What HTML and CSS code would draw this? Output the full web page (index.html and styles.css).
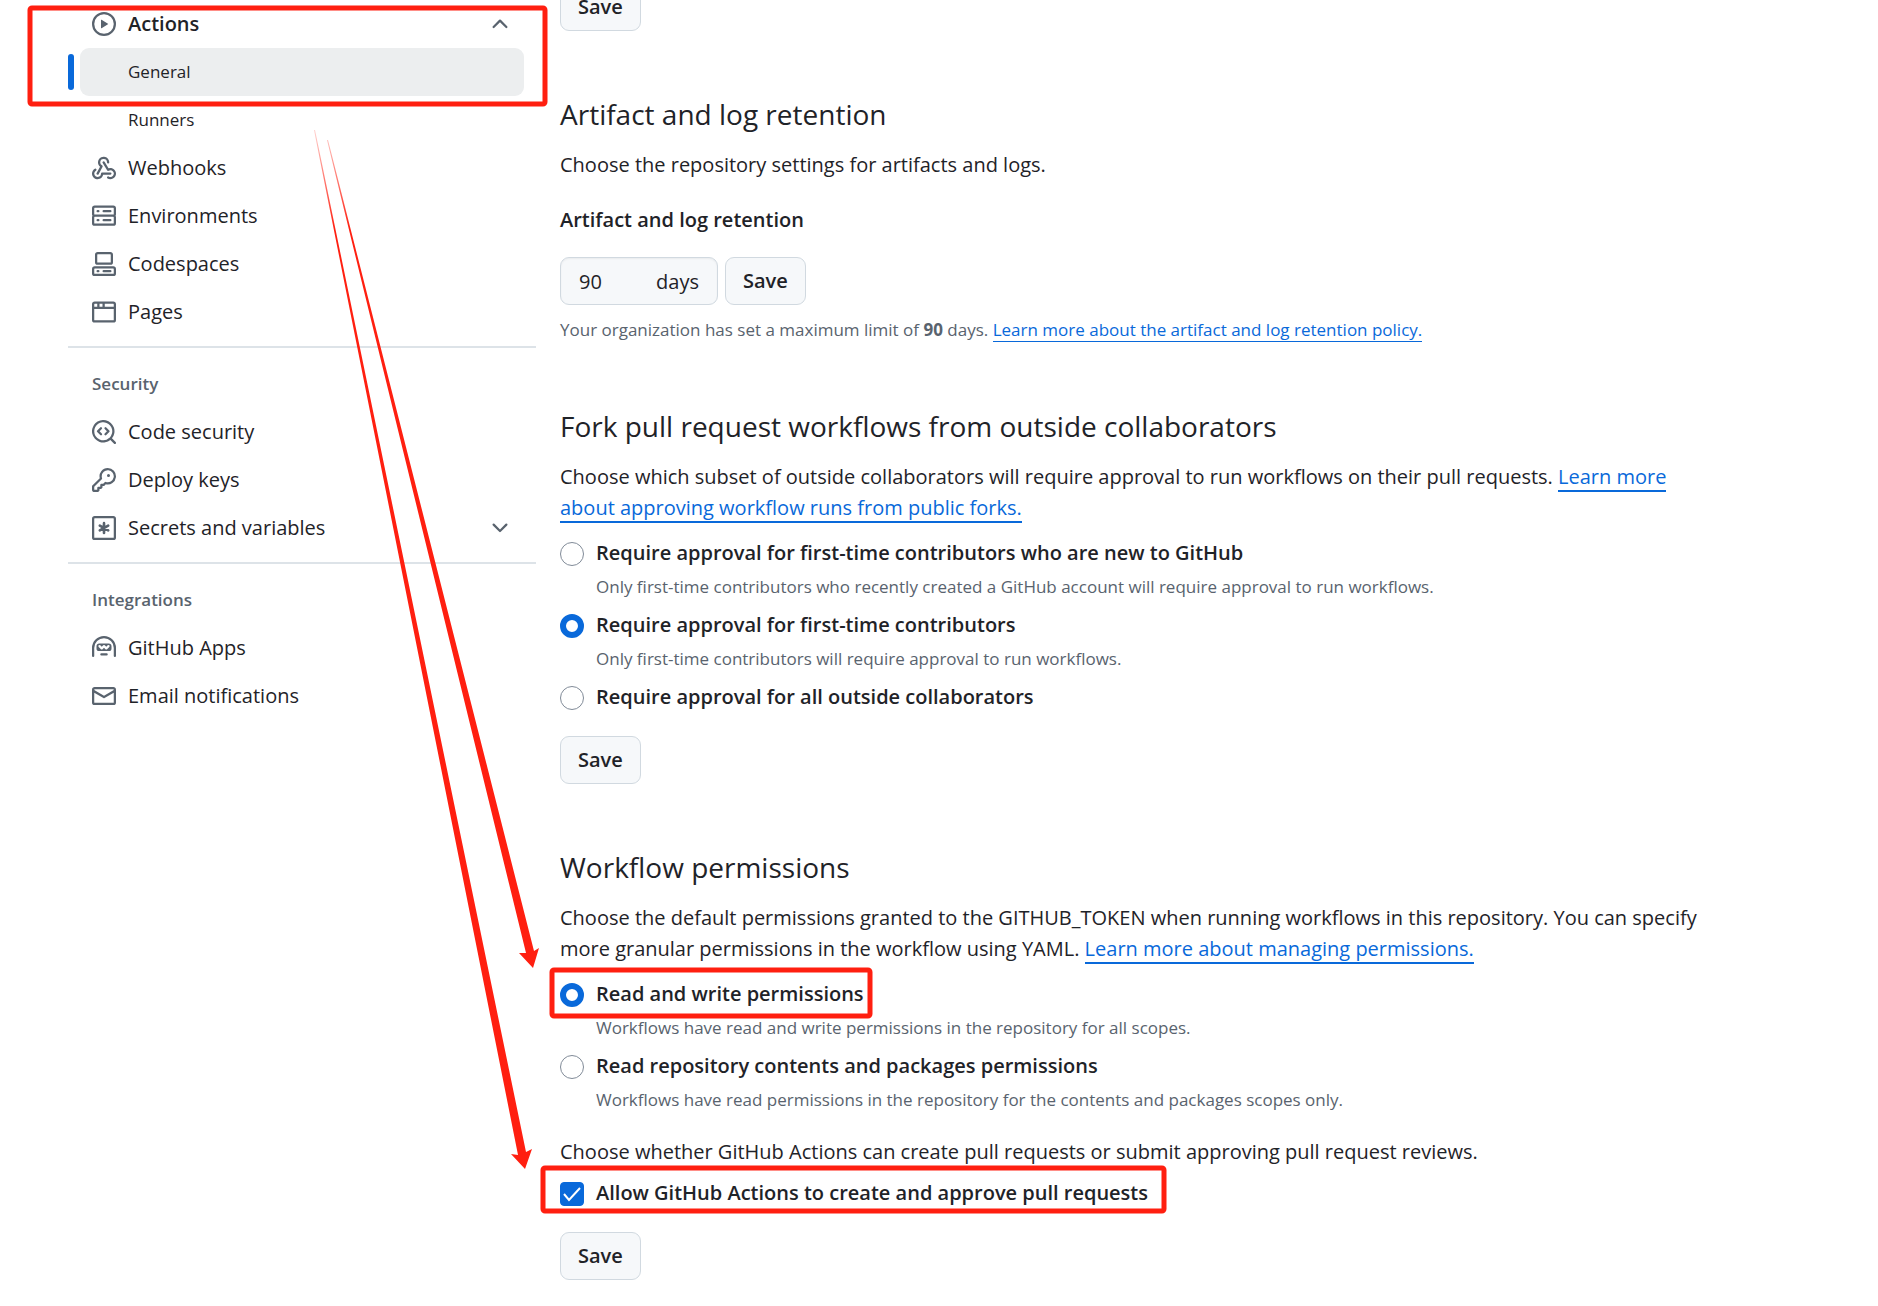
FILE: index.html
```html
<!DOCTYPE html>
<html lang="en">
<head>
<meta charset="utf-8">
<title>Actions settings</title>
<link rel="stylesheet" href="styles.css">
</head>
<body>
<div class="layout">
  <nav class="sidebar" aria-label="Repository settings">
    <ul class="nav-list">
      <li><button type="button" class="nav-item nav-item-open" aria-expanded="true">
        <svg class="icon" viewBox="0 0 16 16"><path d="M8 0a8 8 0 1 1 0 16A8 8 0 0 1 8 0ZM1.5 8a6.5 6.5 0 1 0 13 0 6.5 6.5 0 0 0-13 0Zm4.879-2.773 4.264 2.559a.25.25 0 0 1 0 .428l-4.264 2.559A.25.25 0 0 1 6 10.559V5.442a.25.25 0 0 1 .379-.215Z"/></svg>
        <span class="nav-label">Actions</span>
        <svg class="icon" viewBox="0 0 16 16"><path d="M3.22 10.53a.749.749 0 0 1 0-1.06l4.25-4.25a.749.749 0 0 1 1.06 0l4.25 4.25a.749.749 0 1 1-1.06 1.06L8 6.811 4.28 10.53a.749.749 0 0 1-1.06 0Z"/></svg>
      </button>
        <ul class="nav-list">
          <li><a class="nav-item nav-sub nav-current" href="#general" aria-current="page">General</a></li>
          <li><a class="nav-item nav-sub" href="#runners">Runners</a></li>
        </ul>
      </li>
      <li><a class="nav-item" href="#webhooks">
        <svg class="icon" viewBox="0 0 16 16"><path d="M5.5 4.25a2.25 2.25 0 0 1 4.5 0 .75.75 0 0 0 1.5 0 3.75 3.75 0 1 0-6.14 2.889l-2.272 4.258a.75.75 0 0 0 1.324.706L7 7.25a.75.75 0 0 0-.309-1.015A2.25 2.25 0 0 1 5.5 4.25Z"/><path d="M7.364 3.607a.75.75 0 0 1 1.03.257l2.608 4.349a3.75 3.75 0 1 1-.628 6.785.75.75 0 0 1 .752-1.299 2.25 2.25 0 1 0-.033-3.88.75.75 0 0 1-1.03-.256L7.107 4.636a.75.75 0 0 1 .257-1.03Z"/><path d="M2.9 8.776A.75.75 0 0 1 2.625 9.8 2.25 2.25 0 1 0 6 11.75a.75.75 0 0 1 .75-.751h5.5a.75.75 0 0 1 0 1.5H7.425a3.751 3.751 0 1 1-5.55-3.998.75.75 0 0 1 1.024.274Z"/></svg>
        <span class="nav-label">Webhooks</span></a></li>
      <li><a class="nav-item" href="#environments">
        <svg class="icon" viewBox="0 0 16 16"><path d="M1.75 1h12.5c.966 0 1.75.784 1.75 1.75v4c0 .372-.116.717-.314 1 .198.283.314.628.314 1v4a1.75 1.75 0 0 1-1.75 1.75H1.75A1.75 1.75 0 0 1 0 12.75v-4c0-.358.109-.707.314-1a1.739 1.739 0 0 1-.314-1v-4C0 1.784.784 1 1.75 1ZM1.5 2.75v4c0 .138.112.25.25.25h12.5a.25.25 0 0 0 .25-.25v-4a.25.25 0 0 0-.25-.25H1.75a.25.25 0 0 0-.25.25Zm.25 5.75a.25.25 0 0 0-.25.25v4c0 .138.112.25.25.25h12.5a.25.25 0 0 0 .25-.25v-4a.25.25 0 0 0-.25-.25ZM7 4.75A.75.75 0 0 1 7.75 4h4.5a.75.75 0 0 1 0 1.5h-4.5A.75.75 0 0 1 7 4.75ZM7.75 10h4.5a.75.75 0 0 1 0 1.5h-4.5a.75.75 0 0 1 0-1.5ZM3 4.75A.75.75 0 0 1 3.75 4h.5a.75.75 0 0 1 0 1.5h-.5A.75.75 0 0 1 3 4.75ZM3.75 10h.5a.75.75 0 0 1 0 1.5h-.5a.75.75 0 0 1 0-1.5Z"/></svg>
        <span class="nav-label">Environments</span></a></li>
      <li><a class="nav-item" href="#codespaces">
        <svg class="icon" viewBox="0 0 16 16"><path d="M0 11.25c0-.966.784-1.75 1.75-1.75h12.5c.966 0 1.75.784 1.75 1.75v3A1.75 1.75 0 0 1 14.25 16H1.75A1.75 1.75 0 0 1 0 14.25Zm2-9.5C2 .784 2.784 0 3.75 0h8.5C13.216 0 14 .784 14 1.75v5a1.75 1.75 0 0 1-1.75 1.75h-8.5A1.75 1.75 0 0 1 2 6.75Zm1.75-.25a.25.25 0 0 0-.25.25v5c0 .138.112.25.25.25h8.5a.25.25 0 0 0 .25-.25v-5a.25.25 0 0 0-.25-.25Zm-2 9.5a.25.25 0 0 0-.25.25v3c0 .138.112.25.25.25h12.5a.25.25 0 0 0 .25-.25v-3a.25.25 0 0 0-.25-.25Z"/><path d="M7 12.75a.75.75 0 0 1 .75-.75h4.5a.75.75 0 0 1 0 1.5h-4.5a.75.75 0 0 1-.75-.75Zm-4 0a.75.75 0 0 1 .75-.75h.5a.75.75 0 0 1 0 1.5h-.5a.75.75 0 0 1-.75-.75Z"/></svg>
        <span class="nav-label">Codespaces</span></a></li>
      <li><a class="nav-item" href="#pages">
        <svg class="icon" viewBox="0 0 16 16"><path d="M0 2.75C0 1.784.784 1 1.75 1h12.5c.966 0 1.75.784 1.75 1.75v10.5A1.75 1.75 0 0 1 14.25 15H1.75A1.75 1.75 0 0 1 0 13.25ZM14.5 6h-13v7.25c0 .138.112.25.25.25h12.5a.25.25 0 0 0 .25-.25Zm-6-3.5v2h6V2.75a.25.25 0 0 0-.25-.25ZM5 2.5v2h2v-2Zm-3.25 0a.25.25 0 0 0-.25.25V4.5h2v-2Z"/></svg>
        <span class="nav-label">Pages</span></a></li>
    </ul>
    <hr class="divider">
    <h3 class="nav-heading">Security</h3>
    <ul class="nav-list">
      <li><a class="nav-item" href="#code-security">
        <svg class="icon" viewBox="0 0 16 16"><path d="M8.47 4.97a.75.75 0 0 0 0 1.06L9.94 7.5 8.47 8.97a.75.75 0 1 0 1.06 1.06l2-2a.75.75 0 0 0 0-1.06l-2-2a.75.75 0 0 0-1.06 0ZM6.53 6.03a.75.75 0 0 0-1.06-1.06l-2 2a.75.75 0 0 0 0 1.06l2 2a.75.75 0 1 0 1.06-1.06L5.06 7.5l1.47-1.47Z"/><path d="M12.246 13.307a7.501 7.501 0 1 1 1.06-1.06l2.474 2.473a.749.749 0 1 1-1.06 1.06ZM1.5 7.5a6.002 6.002 0 0 0 3.608 5.504 6.002 6.002 0 0 0 6.486-1.117.748.748 0 0 1 .292-.293A6 6 0 1 0 1.5 7.5Z"/></svg>
        <span class="nav-label">Code security</span></a></li>
      <li><a class="nav-item" href="#deploy-keys">
        <svg class="icon" viewBox="0 0 16 16"><path d="M10.5 0a5.499 5.499 0 1 1-1.288 10.848l-.932.932a.749.749 0 0 1-.53.22H7v.75a.749.749 0 0 1-.22.53l-.5.5a.749.749 0 0 1-.53.22H5v.75a.749.749 0 0 1-.22.53l-.5.5a.749.749 0 0 1-.53.22h-2A1.75 1.75 0 0 1 0 14.25v-2c0-.199.079-.389.22-.53l4.932-4.932A5.5 5.5 0 0 1 10.5 0Zm-4 5.5c-.001.431.069.86.205 1.269a.75.75 0 0 1-.181.768L1.5 12.56v1.69c0 .138.112.25.25.25h1.69l.06-.06v-1.19a.75.75 0 0 1 .75-.75h1.19l.06-.06v-1.19a.75.75 0 0 1 .75-.75h1.19l1.023-1.025a.75.75 0 0 1 .768-.18A4 4 0 1 0 6.5 5.5ZM11 6a1 1 0 1 1 0-2 1 1 0 0 1 0 2Z"/></svg>
        <span class="nav-label">Deploy keys</span></a></li>
      <li><button type="button" class="nav-item" aria-expanded="false">
        <svg class="icon" viewBox="0 0 16 16"><path d="M1.75 0h12.5C15.216 0 16 .784 16 1.75v12.5A1.75 1.75 0 0 1 14.25 16H1.75A1.75 1.75 0 0 1 0 14.25V1.75C0 .784.784 0 1.75 0ZM1.5 1.75v12.5c0 .138.112.25.25.25h12.5a.25.25 0 0 0 .25-.25V1.75a.25.25 0 0 0-.25-.25H1.75a.25.25 0 0 0-.25.25Z"/><path class="icon-line" d="M8 4.75v6.5M5.2 6.4l5.6 3.2M5.2 9.6l5.6-3.2"/></svg>
        <span class="nav-label">Secrets and variables</span>
        <svg class="icon" viewBox="0 0 16 16"><path d="M12.78 5.22a.749.749 0 0 1 0 1.06l-4.25 4.25a.749.749 0 0 1-1.06 0L3.22 6.28a.749.749 0 1 1 1.06-1.06L8 8.939l3.72-3.719a.749.749 0 0 1 1.06 0Z"/></svg>
      </button></li>
    </ul>
    <hr class="divider">
    <h3 class="nav-heading">Integrations</h3>
    <ul class="nav-list">
      <li><a class="nav-item" href="#apps">
        <svg class="icon" viewBox="0 0 16 16"><path d="M0 8a8 8 0 1 1 16 0v5.25a.75.75 0 0 1-1.5 0V8a6.5 6.5 0 1 0-13 0v5.25a.75.75 0 0 1-1.5 0Zm5.5 4.25a.75.75 0 0 1 .75-.75h3.5a.75.75 0 0 1 0 1.5h-3.5a.75.75 0 0 1-.75-.75ZM3 6.75C3 5.784 3.784 5 4.75 5h6.5c.966 0 1.75.784 1.75 1.75v1.5A1.75 1.75 0 0 1 11.25 10h-6.5A1.75 1.75 0 0 1 3 8.25Zm1.47-.53a.75.75 0 0 0 0 1.06l1.5 1.5a.75.75 0 0 0 1.06 0L8 7.81l.97.97a.75.75 0 0 0 1.06 0l1.5-1.5a.75.75 0 0 0-1.06-1.06l-.97.97-.97-.97a.75.75 0 0 0-1.06 0l-.97.97-.97-.97a.75.75 0 0 0-1.06 0Z"/></svg>
        <span class="nav-label">GitHub Apps</span></a></li>
      <li><a class="nav-item" href="#email">
        <svg class="icon" viewBox="0 0 16 16"><path d="M1.75 2h12.5c.966 0 1.75.784 1.75 1.75v8.5A1.75 1.75 0 0 1 14.25 14H1.75A1.75 1.75 0 0 1 0 12.25v-8.5C0 2.784.784 2 1.75 2ZM1.5 12.251c0 .138.112.25.25.25h12.5a.25.25 0 0 0 .25-.25V5.809L8.38 9.397a.75.75 0 0 1-.76 0L1.5 5.809v6.442Zm13-8.181v-.32a.25.25 0 0 0-.25-.25H1.75a.25.25 0 0 0-.25.25v.32L8 7.88Z"/></svg>
        <span class="nav-label">Email notifications</span></a></li>
    </ul>
  </nav>

  <main class="content">
    <button type="button" class="btn">Save</button>

    <section class="section">
      <h2 class="section-title">Artifact and log retention</h2>
      <p class="text">Choose the repository settings for artifacts and logs.</p>
      <form class="retention">
        <label class="field-label" for="days">Artifact and log retention</label>
        <div class="field-row">
          <div class="field">
            <input class="field-input" id="days" type="text" inputmode="numeric" value="90">
            <span>days</span>
          </div>
          <button type="button" class="btn">Save</button>
        </div>
        <p class="note">Your organization has set a maximum limit of <strong>90</strong> days. <a class="link link-thin" href="#retention-policy">Learn more about the artifact and log retention policy.</a></p>
      </form>
    </section>

    <section class="section">
      <h2 class="section-title">Fork pull request workflows from outside collaborators</h2>
      <p class="text">Choose which subset of outside collaborators will require approval to run workflows on their pull requests. <a class="link" href="#public-forks">Learn more about approving workflow runs from public forks.</a></p>
      <form>
        <div class="options">
          <div class="option">
            <input class="radio" type="radio" name="approval" id="approval-new">
            <label class="option-label" for="approval-new">Require approval for first-time contributors who are new to GitHub</label>
            <p class="note option-note">Only first-time contributors who recently created a GitHub account will require approval to run workflows.</p>
          </div>
          <div class="option">
            <input class="radio" type="radio" name="approval" id="approval-first" checked>
            <label class="option-label" for="approval-first">Require approval for first-time contributors</label>
            <p class="note option-note">Only first-time contributors will require approval to run workflows.</p>
          </div>
          <div class="option">
            <input class="radio" type="radio" name="approval" id="approval-all">
            <label class="option-label" for="approval-all">Require approval for all outside collaborators</label>
          </div>
        </div>
        <button type="button" class="btn">Save</button>
      </form>
    </section>

    <section class="section">
      <h2 class="section-title">Workflow permissions</h2>
      <p class="text">Choose the default permissions granted to the GITHUB_TOKEN when running workflows in this repository. You can specify more granular permissions in the workflow using YAML. <a class="link" href="#permissions">Learn more about managing permissions.</a></p>
      <form>
        <div class="options">
          <div class="option">
            <input class="radio" type="radio" name="permissions" id="perm-write" checked>
            <label class="option-label" for="perm-write">Read and write permissions</label>
            <p class="note option-note">Workflows have read and write permissions in the repository for all scopes.</p>
          </div>
          <div class="option">
            <input class="radio" type="radio" name="permissions" id="perm-read">
            <label class="option-label" for="perm-read">Read repository contents and packages permissions</label>
            <p class="note option-note">Workflows have read permissions in the repository for the contents and packages scopes only.</p>
          </div>
        </div>
        <p class="text">Choose whether GitHub Actions can create pull requests or submit approving pull request reviews.</p>
        <div class="options options-tight">
          <div class="option">
            <input class="checkbox" type="checkbox" id="allow-pr" checked>
            <label class="option-label" for="allow-pr">Allow GitHub Actions to create and approve pull requests</label>
          </div>
        </div>
        <button type="button" class="btn">Save</button>
      </form>
    </section>
  </main>

  <svg class="annotations" width="1200" height="1240" viewBox="0 0 1200 1240" aria-hidden="true">
    <defs>
      <linearGradient id="fade" gradientUnits="userSpaceOnUse" x1="0" y1="130" x2="0" y2="230">
        <stop offset="0" stop-color="#ff1f10" stop-opacity="0.2"/>
        <stop offset="1" stop-color="#ff1f10"/>
      </linearGradient>
    </defs>
    <g class="frame">
      <rect x="30" y="8" width="515" height="96" rx="2"/>
      <rect x="552" y="970" width="318" height="46" rx="2"/>
      <rect x="543" y="1168" width="621" height="43" rx="2"/>
    </g>
    <path fill="url(#fade)" d="M327 140 L328 140 L534 951 L539 948 L533 968 L519 953 L526 953 Z"/>
    <path fill="url(#fade)" d="M314 130 L315 130 L526 1152 L532 1149 L525 1169 L511 1154 L518 1155 Z"/>
  </svg>
</div>
</body>
</html>
```
FILE: styles.css
```css
* {
  box-sizing: border-box;
}

body {
  margin: 0;
  overflow-x: hidden;
  background: #fff;
  color: #1f2328;
  font: 400 20px/31px "Open Sans", "Noto Sans", sans-serif;
}

h2,
h3,
p,
ul {
  margin: 0;
  padding: 0;
}

button,
input {
  font: inherit;
  color: inherit;
}

/* Page grid */
.layout {
  position: relative;
  display: grid;
  grid-template-columns: 468px minmax(0, 1140px);
  gap: 24px;
  padding: 0 68px 27px;
}

/* Sidebar */
.nav-list {
  list-style: none;
}

.nav-item {
  position: relative;
  display: flex;
  align-items: center;
  gap: 12px;
  width: calc(100% - 24px);
  height: 48px;
  margin: 0 12px;
  padding: 0 12px;
  border: 0;
  border-radius: 9px;
  background: none;
  text-align: left;
  text-decoration: none;
  color: inherit;
}

.nav-item-open {
  font-weight: 600;
}

.nav-label {
  flex: 1;
  padding-bottom: 2px;
}

.nav-sub {
  padding: 0 12px 2px 48px;
  font-size: 17px;
}

.nav-current {
  background: #eceeef;
}

.nav-current::before {
  content: "";
  position: absolute;
  left: -12px;
  top: 6px;
  width: 6px;
  height: 36px;
  border-radius: 3px;
  background: #0969da;
}

.nav-heading {
  padding: 0 24px;
  font-size: 17px;
  font-weight: 600;
  line-height: 48px;
  color: #59636e;
}

.divider {
  height: 2px;
  margin: 10px 0 12px;
  border: 0;
  background: #dde3e8;
}

.icon {
  flex: none;
  width: 24px;
  height: 24px;
  fill: #59636e;
}

.icon-line {
  fill: none;
  stroke: #59636e;
  stroke-width: 1.75;
  stroke-linecap: round;
}

/* Main column; starts partly scrolled past its first button */
.content {
  margin-top: -17px;
}

.btn {
  display: block;
  height: 48px;
  padding: 0 17px 2px;
  border: 1px solid #d1d9e0;
  border-radius: 9px;
  background: #f6f8fa;
  font-size: 20px;
  font-weight: 600;
}

.section {
  padding-top: 61px;
}

.section-title {
  margin-bottom: 12px;
  font-size: 28px;
  font-weight: 400;
  line-height: 45px;
}

.retention {
  display: grid;
  margin-top: 24px;
}

.field-label,
.option-label {
  font-weight: 600;
}

.option-label {
  padding-bottom: 2px;
  line-height: 29px;
}

.field-row {
  display: flex;
  gap: 7px;
  margin: 22px 0 11px;
}

.field {
  display: flex;
  align-items: center;
  justify-content: space-between;
  width: 158px;
  height: 48px;
  padding: 0 18px;
  border: 1px solid #d1d9e0;
  border-radius: 9px;
  background: #f6f8fa;
  box-shadow: inset 0 1px 2px #1f23280f;
}

.field-input {
  width: 60px;
  padding: 0;
  border: 0;
  background: none;
}

.note {
  font-size: 17px;
  line-height: 27px;
  color: #59636e;
}

.link {
  border-bottom: 2px solid #0969da;
  text-decoration: none;
  color: #0969da;
}

.link-thin {
  border-bottom-width: 1px;
}

.options {
  display: grid;
  gap: 10px;
  margin: 15px 0 23px;
}

.options-tight {
  margin-top: 11px;
}

.option {
  display: grid;
  grid-template-columns: 24px 1fr;
  column-gap: 12px;
  row-gap: 4px;
  align-items: center;
}

.option-note {
  grid-column: 2;
}

.radio,
.checkbox {
  appearance: none;
  width: 24px;
  height: 24px;
  margin: 0;
  border: 1px solid #818b98;
  background: #fff;
}

.radio {
  border-radius: 50%;
}

.radio:checked {
  border: 6px solid #0969da;
}

.checkbox {
  border-radius: 4px;
}

.checkbox:checked {
  border-color: #0969da;
  background: #0969da url("data:image/svg+xml,%3Csvg xmlns='http://www.w3.org/2000/svg' viewBox='0 0 24 24'%3E%3Cpath d='M4 12l5 6L20 6' fill='none' stroke='white' stroke-width='2'/%3E%3C/svg%3E") center / 24px no-repeat;
}

/* Hand-drawn marks over the page */
.annotations {
  position: absolute;
  top: 0;
  left: 0;
  pointer-events: none;
}

.frame {
  fill: none;
  stroke: #ff1f10;
  stroke-width: 5;
}
```
